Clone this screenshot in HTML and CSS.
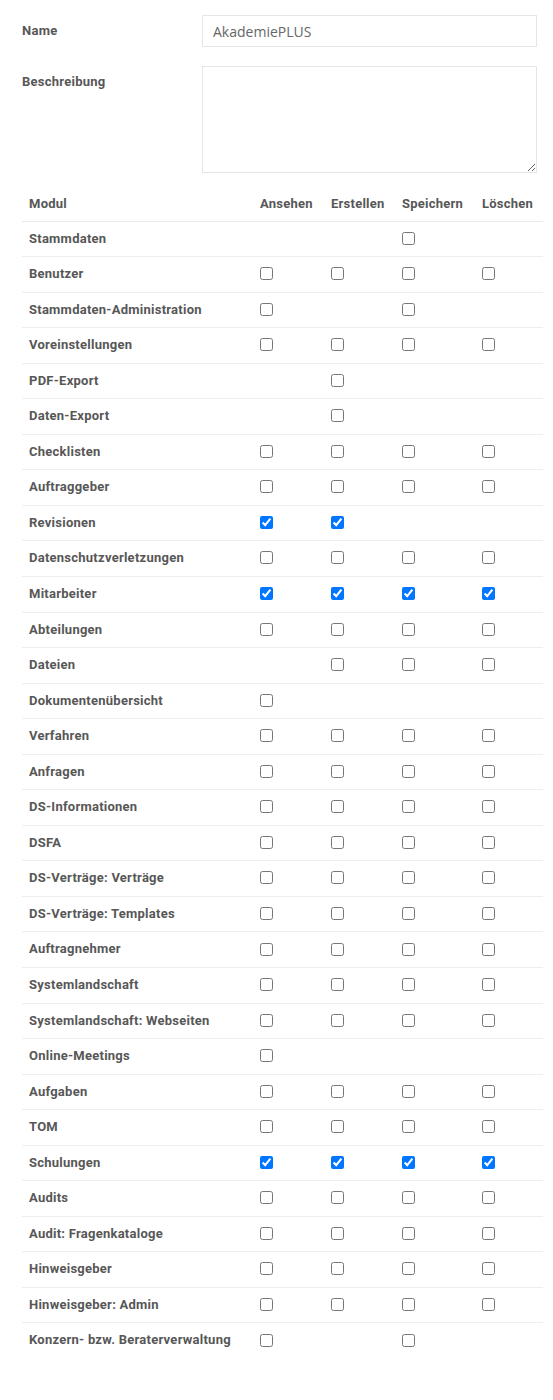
FILE: index.html
```html
<!DOCTYPE html>
<html lang="de">
<head>
<meta charset="utf-8">
<link rel="stylesheet" href="styles.css">
</head>
<body>
<div class="page">
  <div class="form-row">
    <label class="form-label" for="name">Name</label>
    <input class="form-input" id="name" type="text" value="AkademiePLUS">
  </div>
  <div class="form-row">
    <label class="form-label" for="desc">Beschreibung</label>
    <textarea class="form-textarea" id="desc"></textarea>
  </div>
  <table class="perm">
    <colgroup>
      <col class="c-mod"><col class="c-a"><col class="c-b"><col class="c-c"><col class="c-d">
    </colgroup>
    <thead>
      <tr><th>Modul</th><th>Ansehen</th><th>Erstellen</th><th>Speichern</th><th>Löschen</th></tr>
    </thead>
    <tbody id="rows"></tbody>
  </table>
</div>
<script>
var data = [
 ["Stammdaten","-","-","0","-"],
 ["Benutzer","0","0","0","0"],
 ["Stammdaten-Administration","0","-","0","-"],
 ["Voreinstellungen","0","0","0","0"],
 ["PDF-Export","-","0","-","-"],
 ["Daten-Export","-","0","-","-"],
 ["Checklisten","0","0","0","0"],
 ["Auftraggeber","0","0","0","0"],
 ["Revisionen","1","1","-","-"],
 ["Datenschutzverletzungen","0","0","0","0"],
 ["Mitarbeiter","1","1","1","1"],
 ["Abteilungen","0","0","0","0"],
 ["Dateien","-","0","0","0"],
 ["Dokumentenübersicht","0","-","-","-"],
 ["Verfahren","0","0","0","0"],
 ["Anfragen","0","0","0","0"],
 ["DS-Informationen","0","0","0","0"],
 ["DSFA","0","0","0","0"],
 ["DS-Verträge: Verträge","0","0","0","0"],
 ["DS-Verträge: Templates","0","0","0","0"],
 ["Auftragnehmer","0","0","0","0"],
 ["Systemlandschaft","0","0","0","0"],
 ["Systemlandschaft: Webseiten","0","0","0","0"],
 ["Online-Meetings","0","-","-","-"],
 ["Aufgaben","0","0","0","0"],
 ["TOM","0","0","0","0"],
 ["Schulungen","1","1","1","1"],
 ["Audits","0","0","0","0"],
 ["Audit: Fragenkataloge","0","0","0","0"],
 ["Hinweisgeber","0","0","0","0"],
 ["Hinweisgeber: Admin","0","0","0","0"],
 ["Konzern- bzw. Beraterverwaltung","0","-","0","-"]
];
var tb = document.getElementById("rows");
data.forEach(function(r){
  var tr = document.createElement("tr");
  var th = document.createElement("td");
  th.className = "mod";
  th.textContent = r[0];
  tr.appendChild(th);
  for (var i = 1; i < 5; i++) {
    var td = document.createElement("td");
    if (r[i] !== "-") {
      var cb = document.createElement("input");
      cb.type = "checkbox";
      cb.className = "cb";
      if (r[i] === "1") cb.checked = true;
      td.appendChild(cb);
    }
    tr.appendChild(td);
  }
  tb.appendChild(tr);
});
</script>
</body>
</html>
```
FILE: styles.css
```css
html, body {
  margin: 0;
  padding: 0;
  background: #fff;
}
body {
  font-family: Roboto, "Liberation Sans", sans-serif;
  color: #575757;
}
.page {
  padding: 15px 10px 0 22px;
}
.form-row {
  display: flex;
  align-items: flex-start;
  margin-bottom: 20px;
}
.form-label {
  width: 180px;
  flex: none;
  font-size: 13px;
  font-weight: 700;
  letter-spacing: 0.25px;
  line-height: 32px;
  color: #575757;
}
.form-input {
  box-sizing: border-box;
  width: 335px;
  height: 32px;
  border: 1px solid #e6e6e6;
  border-radius: 0;
  padding: 0 10px;
  font-family: "Open Sans", sans-serif;
  font-size: 14px;
  color: #666;
  outline: none;
  margin: 0;
}
.form-textarea {
  box-sizing: border-box;
  width: 335px;
  height: 107px;
  border: 1px solid #e6e6e6;
  border-radius: 0;
  margin: 0;
  padding: 6px 10px;
  resize: vertical;
  outline: none;
}
.form-row + .form-row {
  margin-top: -1px;
  margin-bottom: 13px;
}
.perm {
  border-collapse: collapse;
  table-layout: fixed;
  width: 521px;
}
.c-mod { width: 231px; }
.c-a { width: 71px; }
.c-b { width: 71px; }
.c-c { width: 80px; }
.c-d { width: 68px; }
.perm th {
  text-align: left;
  font-size: 13px;
  font-weight: 700;
  letter-spacing: 0.25px;
  padding: 9px 7px 7px;
  line-height: 18.5px;
  border-bottom: 1.5px solid #eaeaea;
  white-space: nowrap;
}
.perm td {
  padding: 8px 7px;
  line-height: 18.55px;
  border-top: 1.5px solid #eeeeee;
  vertical-align: middle;
  font-size: 13px;
  white-space: nowrap;
}
.perm tbody tr:first-child td {
  border-top: none;
}
.perm td.mod {
  font-weight: 700;
  letter-spacing: 0.25px;
}
.cb {
  margin: 0;
  width: 13px;
  height: 13px;
  vertical-align: middle;
  position: relative;
  top: -1px;
}
```
